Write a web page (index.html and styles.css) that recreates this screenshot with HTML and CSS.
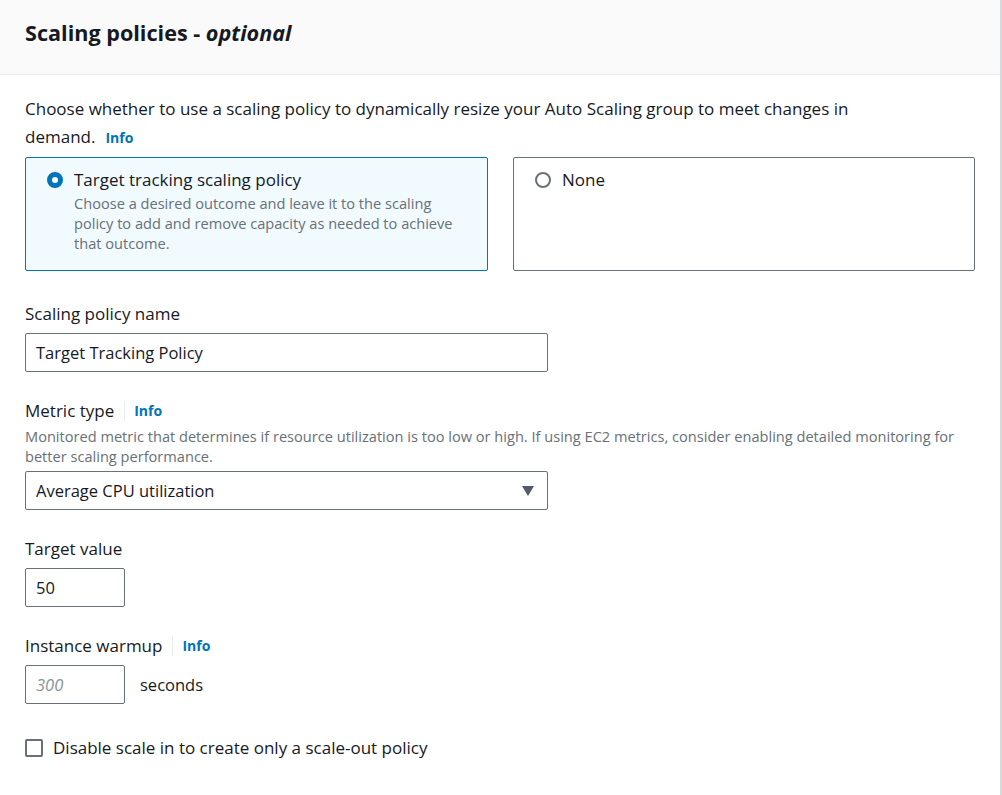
FILE: index.html
```html
<!DOCTYPE html>
<html>
<head>
<meta charset="utf-8">
<link rel="stylesheet" href="styles.css">
</head>
<body>
<div class="panel">
  <div class="header">
    <h2 class="title">Scaling policies - <i>optional</i></h2>
  </div>
  <div class="content">
    <p class="intro">Choose whether to use a scaling policy to dynamically resize your Auto Scaling group to meet changes in demand.<a class="info">Info</a></p>
    <div class="tiles">
      <div class="tile selected">
        <div class="tile-row">
          <span class="radio checked"></span>
          <div class="tile-text">
            <div class="tile-label">Target tracking scaling policy</div>
            <div class="tile-desc">Choose a desired outcome and leave it to the scaling policy to add and remove capacity as needed to achieve that outcome.</div>
          </div>
        </div>
      </div>
      <div class="tile">
        <div class="tile-row">
          <span class="radio"></span>
          <div class="tile-text">
            <div class="tile-label">None</div>
          </div>
        </div>
      </div>
    </div>

    <div class="field first">
      <div class="label">Scaling policy name</div>
      <div class="input wide">Target Tracking Policy</div>
    </div>

    <div class="field">
      <div class="label">Metric type <span class="sep"></span><a class="info">Info</a></div>
      <div class="desc">Monitored metric that determines if resource utilization is too low or high. If using EC2 metrics, consider enabling detailed monitoring for better scaling performance.</div>
      <div class="input wide select">Average CPU utilization
        <svg class="caret" width="12" height="10" viewBox="0 0 12 10"><path d="M0 0 H12 L6 10 Z" fill="#545b64"/></svg>
      </div>
    </div>

    <div class="field">
      <div class="label">Target value</div>
      <div class="input small">50</div>
    </div>

    <div class="field">
      <div class="label">Instance warmup <span class="sep"></span><a class="info">Info</a></div>
      <div class="inline">
        <div class="input small placeholder">300</div>
        <span class="unit">seconds</span>
      </div>
    </div>

    <div class="check">
      <span class="checkbox"></span>
      <span>Disable scale in to create only a scale-out policy</span>
    </div>
  </div>
</div>
</body>
</html>
```
FILE: styles.css
```css
html, body {
  margin: 0;
  padding: 0;
  background: #ffffff;
}
body {
  font-family: "Open Sans", "Noto Sans", sans-serif;
  color: #16191f;
  font-size: 17px;
}
.panel {
  width: 1000px;
  height: 795px;
  border-right: 2px solid #d5dbdb;
}
.header {
  background: #fafafa;
  border-bottom: 1px solid #eaeded;
  height: 74px;
  padding: 0 25px;
  display: flex;
  align-items: center;
}
.title {
  margin: 0;
  font-size: 21.6px;
  font-weight: 700;
  margin-top: -10px;
}
.title i {
  font-weight: 700;
}
.content {
  padding: 0 25px;
  width: 950px;
}
.intro {
  margin: 20px 0 0;
  line-height: 28px;
  max-width: 880px;
}
.intro .info {
  margin-left: 10px;
}
.info {
  color: #0073bb;
  font-weight: 700;
  font-size: 14px;
}
.tiles {
  display: grid;
  grid-template-columns: 463px 462px;
  column-gap: 25px;
  margin-top: 5px;
}
.tile {
  border: 1px solid #687078;
  border-radius: 2px;
  height: 114px;
  box-sizing: border-box;
  padding: 12px 20px 12px 21px;
}
.tile.selected {
  background: #f1faff;
  border-color: #0073bb;
}
.tile-row {
  display: flex;
  gap: 11px;
}
.radio {
  flex: none;
  width: 12px;
  height: 12px;
  border: 2px solid #687078;
  border-radius: 50%;
  margin-top: 2px;
}
.radio.checked {
  border: 5px solid #0073bb;
  width: 6px;
  height: 6px;
  background: #fff;
}
.tile-label {
  line-height: 20px;
}
.tile-desc {
  color: #687078;
  font-size: 14.6px;
  line-height: 20px;
  margin-top: 3px;
}
.field {
  margin-top: 28px;
}
.field.first {
  margin-top: 32px;
}
.label {
  line-height: 22px;
  display: flex;
  align-items: center;
}
.sep {
  display: inline-block;
  width: 1px;
  height: 20px;
  background: #eaeded;
  margin: 0 9px 0 10px;
}
.desc {
  color: #687078;
  font-size: 14.6px;
  line-height: 20px;
  margin-top: 4px;
}
.desc + .input {
  margin-top: 5px;
}
.input {
  border: 1px solid #687078;
  border-radius: 2px;
  height: 39px;
  box-sizing: border-box;
  padding: 0 10px;
  display: flex;
  align-items: center;
  margin-top: 8px;
  font-size: 16.5px;
}
.wide {
  width: 523px;
}
.small {
  width: 100px;
}
.select {
  justify-content: space-between;
  padding-right: 13px;
}
.placeholder {
  color: #879596;
  font-style: italic;
}
.inline {
  display: flex;
  align-items: center;
  gap: 15px;
}
.unit {
  margin-top: 8px;
  font-size: 16.5px;
}
.check {
  display: flex;
  align-items: center;
  gap: 10px;
  margin-top: 32px;
}
.checkbox {
  width: 14px;
  height: 14px;
  border: 2px solid #687078;
  border-radius: 2px;
}
```
